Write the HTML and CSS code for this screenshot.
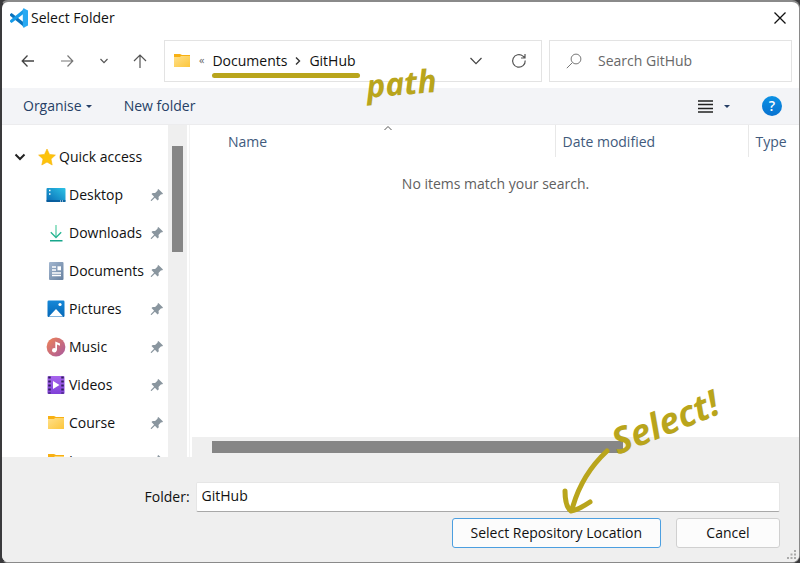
FILE: index.html
```html
<!DOCTYPE html>
<html lang="en">
<head>
<meta charset="utf-8">
<title>Select Folder</title>
<meta name="viewport" content="width=device-width, initial-scale=1">
<link rel="stylesheet" href="styles.css">
</head>
<body>
<svg class="defs" aria-hidden="true">
  <defs>
    <linearGradient id="g-folder" x1="0" y1="0" x2="1" y2="1"><stop offset="0" stop-color="#ffe08a"/><stop offset="1" stop-color="#fcc63c"/></linearGradient>
    <linearGradient id="g-desktop" x1="0" y1="1" x2="1" y2="0"><stop offset="0" stop-color="#0869b4"/><stop offset="1" stop-color="#2cc3e6"/></linearGradient>
    <linearGradient id="g-down" x1="0" y1="0" x2="0" y2="1"><stop offset="0" stop-color="#35c98f"/><stop offset="1" stop-color="#16a58b"/></linearGradient>
    <linearGradient id="g-doc" x1="0" y1="0" x2="1" y2="1"><stop offset="0" stop-color="#a3b7d0"/><stop offset="1" stop-color="#66809f"/></linearGradient>
    <linearGradient id="g-pic" x1="0" y1="0" x2="0" y2="1"><stop offset="0" stop-color="#1688d8"/><stop offset="1" stop-color="#0568b8"/></linearGradient>
    <linearGradient id="g-music" x1="0" y1="0" x2="1" y2="1"><stop offset="0" stop-color="#f08355"/><stop offset="1" stop-color="#a7599f"/></linearGradient>
    <linearGradient id="g-video" x1="0" y1="0" x2="0" y2="1"><stop offset="0" stop-color="#a866ee"/><stop offset="1" stop-color="#8040d8"/></linearGradient>
    <symbol id="i-pin" viewBox="0 0 14 14"><path fill="#8a969f" d="M8.400 1 13 5.500 12 6.600l-.9-.3-2.600 2.700.3 2.300-1.200 1.200-2.700-2.700L1.500 13l-.7-.1.1-.8 3.200-3.400-2.600-2.600 1.200-1.200 2.400.2 2.600-2.500L7.400 2z"/></symbol>
    <symbol id="i-folder" viewBox="0 0 18 16"><path fill="#f8b013" d="M1 1h6l2 1h8v4H1z"/><path fill="url(#g-folder)" d="M1 4h6l1-1h9v10.500a.5.5 0 0 1-.5.5h-15a.5.5 0 0 1-.5-.5z"/></symbol>
  </defs>
</svg>
<main class="dialog">
  <header class="titlebar">
    <svg class="logo" viewBox="0 0 20 20" aria-hidden="true">
      <path fill="#0872bd" d="M1 6.200 2.600 5 15.600 15v4.600L1.100 7.700z"/>
      <path fill="#179be8" d="M1 13.800 2.600 15 15.600 5V.4L1.100 12.300z"/>
      <path fill="#28a9f2" d="M14.500.3 19 2.400v15.200l-4.500 2.100-.7-.8V1.100z"/>
    </svg>
    <h1>Select Folder</h1>
    <button class="icon-btn close" aria-label="Close"><svg width="12" height="12" viewBox="0 0 12 12"><path d="M.5.5l11 11M11.500.5l-11 11" stroke="#111" stroke-width="1.300"/></svg></button>
  </header>

  <nav class="navbar" aria-label="Location">
    <div class="history">
      <button class="icon-btn" aria-label="Back"><svg width="14" height="14" viewBox="0 0 14 14"><path d="M13 7H1.500M6.500 1.500 1.200 7l5.300 5.500" stroke="#444" stroke-width="1.300"/></svg></button>
      <button class="icon-btn" aria-label="Forward"><svg width="14" height="14" viewBox="0 0 14 14"><path d="M1 7h11.500M7.500 1.500 12.800 7l-5.300 5.500" stroke="#777" stroke-width="1.200"/></svg></button>
      <button class="icon-btn" aria-label="Recent locations"><svg width="8" height="8" viewBox="0 0 8 8"><path d="M.5 2 4 5.700 7.500 2" stroke="#555" stroke-width="1.200"/></svg></button>
      <button class="icon-btn" aria-label="Up"><svg width="14" height="14" viewBox="0 0 14 14"><path d="M7 14V1M1 7l6-6 6 6" stroke="#555" stroke-width="1.200"/></svg></button>
    </div>
    <div class="address">
      <svg class="address-folder" aria-hidden="true"><use href="#i-folder"/></svg>
      <span class="more">«</span>
      <div class="crumbs">
        <a href="#">Documents</a>
        <svg width="6" height="8" viewBox="0 0 6 8" aria-hidden="true"><path d="M1 .5 4.500 4 1 7.500" stroke="#333" stroke-width="1.400"/></svg>
        <a href="#">GitHub</a>
        <span class="note underline"></span>
        <span class="note note-path">path</span>
      </div>
      <button class="icon-btn drop" aria-label="Previous locations"><svg width="12" height="8" viewBox="0 0 12 8"><path d="M.5 1 6 6.700 11.500 1" stroke="#444" stroke-width="1.200"/></svg></button>
      <button class="icon-btn" aria-label="Refresh"><svg width="16" height="16" viewBox="0 0 16 16"><path d="M14.200 7.500a6.300 6.300 0 1 1-2.200-4.400l1.800 1.700M14 1v4h-4" stroke="#555" stroke-width="1.200"/></svg></button>
    </div>
    <label class="search">
      <svg width="16" height="16" viewBox="0 0 16 16" aria-hidden="true"><path d="M.8 15.200 6.300 9.700" stroke="#777"/><circle cx="10" cy="6" r="4.900" stroke="#777"/></svg>
      <input type="search" placeholder="Search GitHub" aria-label="Search GitHub">
    </label>
  </nav>

  <div class="toolbar">
    <button class="tool">Organise <span class="caret"></span></button>
    <button class="tool">New folder</button>
    <button class="tool view" aria-label="Change view"><svg width="15" height="13" viewBox="0 0 15 13"><path d="M0 1h15M0 4.500h15M0 8.500h15M0 12h15" stroke="#222" stroke-width="1.400"/></svg><span class="caret"></span></button>
    <button class="icon-btn help" aria-label="Help">?</button>
  </div>

  <div class="content">
    <aside class="sidebar">
      <div class="tree">
        <button class="root"><svg width="12" height="8" viewBox="0 0 12 8" aria-hidden="true"><path d="M1.500 1.500 6 6l4.500-4.500" stroke="#222" stroke-width="2"/></svg><svg width="18" height="18" viewBox="0 0 18 18" aria-hidden="true"><path fill="#fdc30b" stroke="#f7b30c" stroke-width=".6" stroke-linejoin="round" d="M9 1l2.500 5.400 5.900.7-4.400 4 1.200 5.900L9 14.100 3.800 17 5 11.100.6 7.100l5.900-.7z"/></svg>Quick access</button>
        <ul>
          <li><a href="#"><svg viewBox="0 0 20 20" aria-hidden="true"><rect x=".5" y="3" width="19" height="14" rx="1" fill="url(#g-desktop)"/><path d="M3 5.500h1.500M3 9h1.500" stroke="#fff" stroke-width="1.500"/><path d="M.5 16h19" stroke="#075493" stroke-width="1.500"/><path d="M14 16h4" stroke="#fff" stroke-dasharray="1 1"/></svg>Desktop</a><svg class="pin" aria-hidden="true"><use href="#i-pin"/></svg></li>
          <li><a href="#"><svg viewBox="0 0 20 20" aria-hidden="true"><path d="M9.500 2h1v12h-1zM4 17h12.500v1.400H4z" fill="url(#g-down)"/><path d="M4.800 9.300 10 14.500l5.200-5.200" stroke="#25b591" stroke-width="1.300"/></svg>Downloads</a><svg class="pin" aria-hidden="true"><use href="#i-pin"/></svg></li>
          <li><a href="#"><svg viewBox="0 0 20 20" aria-hidden="true"><rect x="3" y="1" width="14.500" height="18" rx="1" fill="url(#g-doc)"/><path d="M6 6h4M6 9h4M6 12h9M6 14.500h9" stroke="#fff" stroke-width="1.300"/><path d="M11.500 5.300H15v4h-3.500z" fill="#fff"/></svg>Documents</a><svg class="pin" aria-hidden="true"><use href="#i-pin"/></svg></li>
          <li><a href="#"><svg viewBox="0 0 20 20" aria-hidden="true"><rect x="1.500" y="1.500" width="17" height="16.500" rx="1.200" fill="url(#g-pic)"/><path d="m3 17.500 7-7.500 7 7.500z" fill="#fff"/><circle cx="14" cy="5.500" r="1.600" fill="#fff"/></svg>Pictures</a><svg class="pin" aria-hidden="true"><use href="#i-pin"/></svg></li>
          <li><a href="#"><svg viewBox="0 0 20 20" aria-hidden="true"><circle cx="10" cy="10" r="9.400" fill="url(#g-music)"/><circle cx="8.300" cy="13.300" r="2.300" fill="#fff"/><path d="M9.300 13.300V4.500l4.700 2v2.300l-3-1.200v5.700z" fill="#fff"/></svg>Music</a><svg class="pin" aria-hidden="true"><use href="#i-pin"/></svg></li>
          <li><a href="#"><svg viewBox="0 0 20 20" aria-hidden="true"><rect x="1.500" y="1" width="17" height="18" rx="1" fill="url(#g-video)"/><path d="M3.500 1.500v17M16.500 1.500v17" stroke="#33205e" stroke-width="2.500" stroke-dasharray="2 2"/><path d="m7 6 6.500 4L7 14z" fill="#fff"/></svg>Videos</a><svg class="pin" aria-hidden="true"><use href="#i-pin"/></svg></li>
          <li><a href="#"><svg viewBox="0 0 20 20" aria-hidden="true"><use href="#i-folder" x="1" y="2" width="18" height="16"/></svg>Course</a><svg class="pin" aria-hidden="true"><use href="#i-pin"/></svg></li>
          <li><a href="#"><svg viewBox="0 0 20 20" aria-hidden="true"><use href="#i-folder" x="1" y="2" width="18" height="16"/></svg>Images</a><svg class="pin" aria-hidden="true"><use href="#i-pin"/></svg></li>
        </ul>
      </div>
      <div class="vscroll"><div class="vthumb"></div></div>
    </aside>
    <section class="files">
      <table>
        <thead><tr>
          <th scope="col" class="col-name">Name<svg class="sort" width="8" height="6" viewBox="0 0 8 6" aria-hidden="true"><path d="M.5 5 4 1.500 7.500 5" stroke="#555"/></svg></th>
          <th scope="col" class="col-date">Date modified</th>
          <th scope="col" class="col-type">Type</th>
        </tr></thead>
        <tbody><tr><td colspan="3">No items match your search.</td></tr></tbody>
      </table>
      <div class="hscroll"><div class="hthumb"></div></div>
    </section>
  </div>

  <footer class="footer">
    <div class="field">
      <label for="folder">Folder:</label>
      <input id="folder" type="text" value="GitHub">
    </div>
    <div class="actions">
      <div class="primary-wrap">
        <button class="btn primary">Select Repository Location</button>
        <svg class="note arrow" viewBox="0 0 56 70" aria-hidden="true"><path d="M49 3C34 17 22 34 15 58M7 43c0 10 2 17 6 20 7-1 13-5 19-9" stroke="#b9a51c" stroke-width="5" stroke-linecap="round" stroke-linejoin="round"/></svg>
        <span class="note note-select">Select!</span>
      </div>
      <button class="btn">Cancel</button>
    </div>
    <svg class="grip" width="10" height="10" viewBox="0 0 10 10" aria-hidden="true"><path fill="#aaa" d="M7 0h2v2H7zM7 3.500h2v2H7zM7 7h2v2H7zM3.500 3.500h2v2h-2zM3.500 7h2v2h-2zM0 7h2v2H0z"/></svg>
  </footer>
</main>
</body>
</html>
```
FILE: styles.css
```css
* { box-sizing: border-box; }

body {
  margin: 0;
  background: #3a3a3c;
  color: #111;
  font: 14px/20px "Open Sans", "Noto Sans", sans-serif;
}

svg { fill: none; flex: none; }
a { color: inherit; text-decoration: none; }
button, input { font: inherit; color: inherit; }
button { padding: 0; border: 0; background: none; white-space: nowrap; }

.defs { position: absolute; width: 0; height: 0; }

.dialog {
  display: flex;
  flex-direction: column;
  height: 100vh;
  border: solid #8a8a8a;
  border-width: 2px 1px 1px 2px;
  border-left-color: #3a3a3c;
  border-radius: 8px;
  background: #fff;
  overflow: hidden;
}

.titlebar {
  display: flex;
  align-items: center;
  gap: 2px;
  height: 32px;
  padding: 0 13px 0 7px;
}
.titlebar h1 { margin: 0; font-size: 14px; font-weight: 400; }
.logo { width: 20px; height: 20px; }
.icon-btn { display: grid; place-items: center; flex: none; }
.close { margin-left: auto; }

.navbar {
  display: flex;
  align-items: center;
  gap: 7px;
  height: 54px;
  padding: 0 7px 0 19px;
}
.history { display: flex; justify-content: space-between; width: 136px; }
.history .icon-btn:last-child { margin-right: 10px; }
.address, .search {
  display: flex;
  align-items: center;
  height: 42px;
  border: 1px solid #e3e3e3;
}
.address { flex: 356; padding: 0 14px 0 8px; }
.address-folder { width: 18px; height: 16px; }
.more { margin: 0 8px 2px; color: #666; font-size: 11px; }
.crumbs { position: relative; display: flex; align-items: center; gap: 8px; }
.drop { margin: 0 29px 0 auto; }
.search { flex: 208; gap: 16px; padding: 0 16px; }
.search input {
  flex: 1;
  min-width: 0;
  padding: 0;
  border: 0;
  outline: 0;
  background: none;
}
.search input::placeholder { color: #686868; opacity: 1; }

.toolbar {
  display: flex;
  align-items: center;
  gap: 32px;
  height: 37px;
  padding: 0 17px 0 21px;
  background: #f3f4f7;
  border-bottom: 1px solid #ececee;
  color: #263f66;
}
.tool { display: flex; align-items: center; gap: 4px; }
.caret { border: 3px solid transparent; border-top-color: currentColor; border-bottom: 0; }
.view { gap: 11px; margin-left: auto; }
.help {
  width: 20px;
  height: 20px;
  border-radius: 50%;
  background: linear-gradient(#0c91e4, #0872d0);
  color: #fff;
  font-weight: 600;
}

.content { display: flex; flex: 1; min-height: 0; }
.sidebar { display: flex; flex: none; width: 188px; padding-right: 2px; border-right: 1px solid #f3f3f3; }
.tree { flex: 1; padding-top: 13px; overflow: hidden; }
.tree ul { margin: 0; padding: 0; list-style: none; }
.root, .tree li, .tree li a { display: flex; align-items: center; }
.root { height: 38px; padding-left: 12px; gap: 3px; }
.root svg:first-child { margin-right: 9px; }
.tree li { justify-content: space-between; height: 38px; padding: 0 4px 0 44px; }
.tree li a { gap: 3px; }
.tree li a svg { width: 20px; height: 20px; }
.tree .pin { width: 14px; height: 14px; }
.vscroll { width: 19px; padding: 21px 4px 0; background: #efefef; }
.vthumb { height: 106px; background: #868686; }

.files { display: flex; flex: 1; flex-direction: column; min-width: 0; padding-left: 2px; }
table { width: 100%; border-collapse: collapse; table-layout: fixed; }
th {
  position: relative;
  height: 32px;
  padding: 1px 0 0 7px;
  border-left: 1px solid #e8e8e8;
  color: #415a7c;
  font-weight: 400;
  text-align: left;
}
.col-name { padding-left: 36px; border-left: 0; }
.col-date { width: 193px; }
.col-type { width: 51px; }
.sort { position: absolute; top: 0; left: 53%; }
td { height: 54px; padding: 0; color: #606060; text-align: center; }
.hscroll { height: 20px; margin-top: auto; padding: 4px 0 4px 20px; background: #efefef; }
.hthumb { width: 70%; height: 12px; background: #868686; }

.footer { position: relative; padding: 25px 19px 14px; background: #efefef; }
.field { display: flex; align-items: center; justify-content: flex-end; gap: 6px; }
.field input {
  width: 77%;
  height: 30px;
  padding: 0 5px 4px;
  border: 1px solid #e6e6e6;
  border-bottom-color: #a8a8a8;
  border-radius: 2px;
  outline: 0;
  background: #fff;
}
.actions { display: flex; justify-content: flex-end; gap: 15px; margin-top: 6px; }
.primary-wrap { position: relative; }
.btn {
  min-width: 104px;
  height: 30px;
  padding: 0 18px;
  border: 1px solid #d0d0d0;
  border-radius: 3px;
  background: #fcfcfc;
}
.primary { border-color: #4c9fe0; }
.grip { position: absolute; right: 2px; bottom: 2px; }

/* Handwritten-style callouts */
.note { position: absolute; z-index: 2; color: #b9a51c; pointer-events: none; }
.underline { top: 22px; left: 0; right: -4px; height: 5px; border-radius: 3px; background: #b9a51c; }
.note-path { top: 12px; left: 100%; margin-left: 10px; font: italic 700 32px/40px "Open Sans", sans-serif; transform: rotate(-5deg); }
.arrow { top: -70px; right: 47px; width: 56px; height: 70px; }
.note-select { top: -118px; right: -60px; font: italic 700 36px/44px "Open Sans", sans-serif; transform: rotate(-22deg); }
```
